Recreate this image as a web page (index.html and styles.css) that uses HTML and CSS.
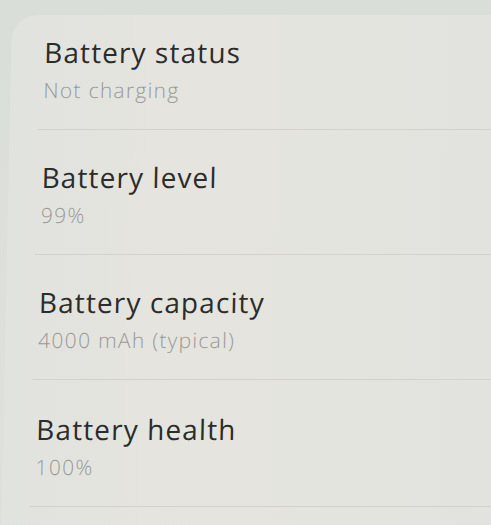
FILE: index.html
```html
<!DOCTYPE html>
<html lang="en">
<head>
    <meta charset="UTF-8">
    <title>Battery information</title>
    <link rel="stylesheet" href="styles.css">
</head>
<body>
<div class="screen">
    <div class="card">
        <div class="row">
            <div class="title">Battery status</div>
            <div class="value">Not charging</div>
        </div>
        <div class="row">
            <div class="title">Battery level</div>
            <div class="value">99%</div>
        </div>
        <div class="row">
            <div class="title">Battery capacity</div>
            <div class="value">4000 mAh (typical)</div>
        </div>
        <div class="row">
            <div class="title">Battery health</div>
            <div class="value">100%</div>
        </div>
    </div>
</div>
</body>
</html>
```

FILE: styles.css
```css
* {
    padding: 0;
    margin: 0;
    box-sizing: border-box;
}

html, body {
    height: 100%;
    overflow: hidden;
}

body {
    background: linear-gradient(180deg, #d9ded9 0%, #dcdfda 40%, #dfe0db 100%);
    font-family: "Open Sans", Roboto, sans-serif;
}

.screen {
    height: 100%;
    padding-top: 15px;
    padding-left: 12px;
    overflow: hidden;
}

.card {
    width: 490px;
    height: 510px;
    border-radius: 26px 0 0 0;
    background: linear-gradient(90deg, #e1e3de 0%, #e5e4df 30%, #e4e4df 70%, #e2e3de 100%);
    transform: skewX(-1.2deg);
    transform-origin: 0 0;
}

.row {
    margin-left: 28px;
    padding: 30px 0 25px 5px;
    border-bottom: 1px solid #d2d1cb;
}

.row:first-child {
    padding-top: 20px;
}

.row:last-child {
    padding-top: 32px;
}

.title {
    font-size: 28px;
    font-weight: 380;
    line-height: 34px;
    letter-spacing: 1.1px;
    color: #2c2c2a;
}

.value {
    margin-top: 7px;
    font-size: 21px;
    font-weight: 350;
    line-height: 28px;
    letter-spacing: 1.3px;
    color: #999996;
}
```
